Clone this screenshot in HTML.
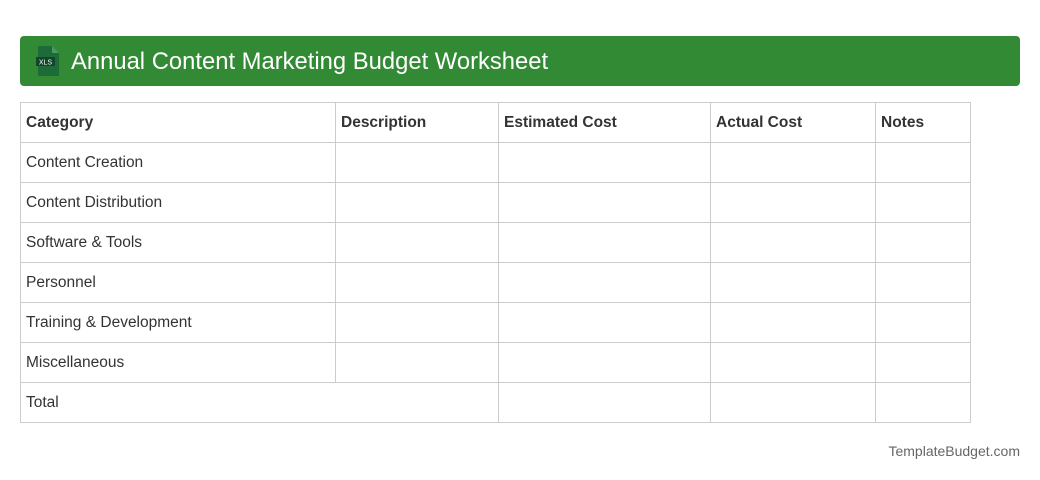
<!DOCTYPE html>
<html><head><style>
body{margin:0;width:1040px;height:480px;background:#fff;font-family:"Liberation Sans",sans-serif;position:relative;overflow:hidden}
.hdr{position:absolute;left:20px;top:36px;width:1000px;height:50px;background:#338a35;border-radius:4px}
.hdr .t{position:absolute;left:51px;top:12px;color:#fff;font-size:23.8px}
table{position:absolute;left:20px;top:102px;border-collapse:collapse;table-layout:fixed}
td{border:1px solid #ccc;height:40px;padding:0 5px;font-size:15.5px;color:#333;box-sizing:border-box}
tr.h td{font-weight:bold}
.f{position:absolute;right:20px;top:443px;font-size:14px;color:#666}
</style></head><body>
<div class="hdr">
<svg style="position:absolute;left:16px;top:10px" width="24" height="30" viewBox="0 0 24 30">
<path d="M2 0H16L23 7V30H2Z" fill="#1e6b3a"/><path d="M16 0V7H23Z" fill="#4a9a62"/>
<rect x="0" y="11" width="19" height="9" fill="#12452a"/>
<text x="9.5" y="18.5" font-size="7" fill="#fff" text-anchor="middle" font-family="Liberation Sans">XLS</text>
</svg>
<div class="t">Annual Content Marketing Budget Worksheet</div></div>
<table>
<colgroup><col style="width:315px"><col style="width:163px"><col style="width:212px"><col style="width:165px"><col style="width:95px"></colgroup>
<tr class="h"><td>Category</td><td>Description</td><td>Estimated Cost</td><td>Actual Cost</td><td>Notes</td></tr>
<tr><td>Content Creation</td><td></td><td></td><td></td><td></td></tr>
<tr><td>Content Distribution</td><td></td><td></td><td></td><td></td></tr>
<tr><td>Software &amp; Tools</td><td></td><td></td><td></td><td></td></tr>
<tr><td>Personnel</td><td></td><td></td><td></td><td></td></tr>
<tr><td>Training &amp; Development</td><td></td><td></td><td></td><td></td></tr>
<tr><td>Miscellaneous</td><td></td><td></td><td></td><td></td></tr>
<tr><td colspan="2">Total</td><td></td><td></td><td></td></tr>
</table>
<div class="f">TemplateBudget.com</div>
</body></html>
